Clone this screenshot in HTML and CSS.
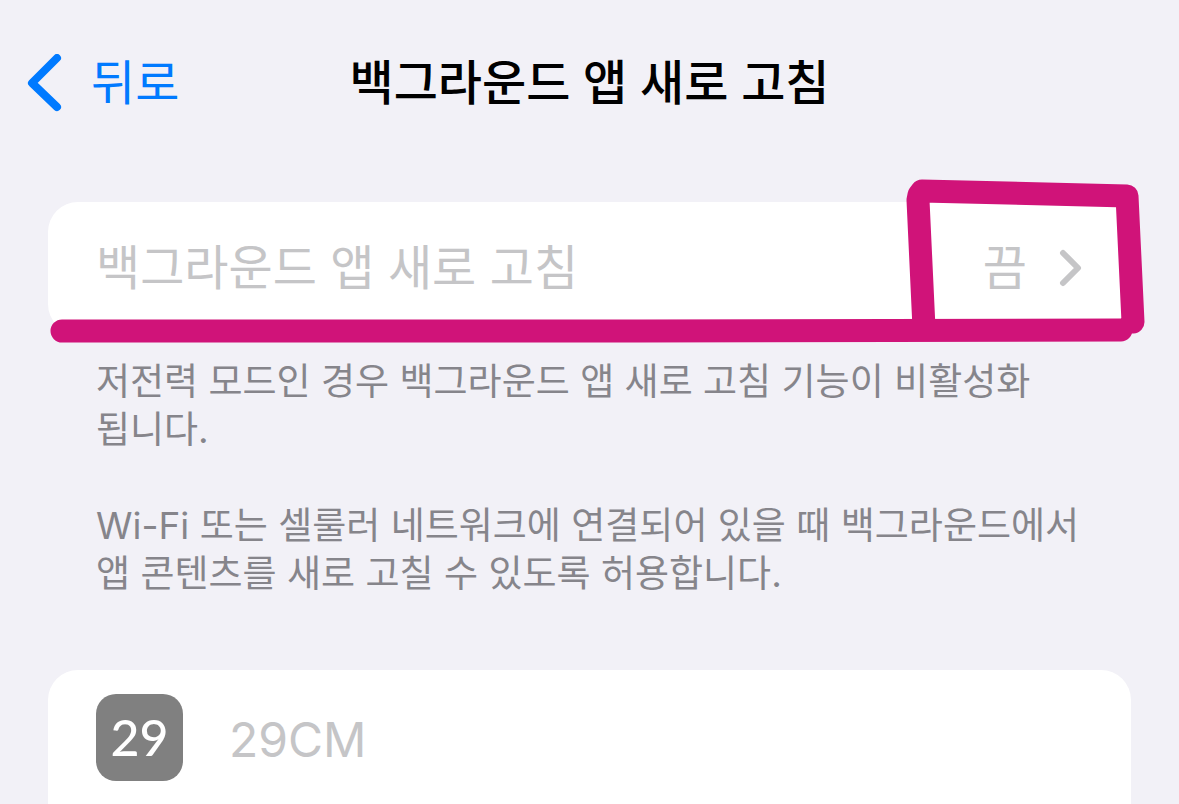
FILE: index.html
```html
<!DOCTYPE html>
<html lang="ko">
<head>
<meta charset="utf-8">
<title>백그라운드 앱 새로 고침</title>
<link rel="stylesheet" href="styles.css">
</head>
<body>
<header class="navbar">
  <a class="back" href="#">
    <svg class="back-icon" viewBox="0 0 36 58" aria-hidden="true"><path d="M30 4 5 29 30 53"/></svg>
    <span>뒤로</span>
  </a>
  <h1 class="title">백그라운드 앱 새로 고침</h1>
</header>
<main class="content">
  <section class="group">
    <button class="card setting" type="button">
      <span class="setting-name">백그라운드 앱 새로 고침</span>
      <span class="setting-value">끔</span>
      <svg class="chevron" viewBox="0 0 24 40" aria-hidden="true"><path d="M4 5 19 20 4 35"/></svg>
    </button>
    <svg class="marker" viewBox="0 0 1083 166" aria-hidden="true">
      <path d="M14 153H590L1073 152M876 150 870 22 871 17 874 13 1079 18 1085 144"/>
    </svg>
  </section>
  <div class="notes">
    <p>저전력 모드인 경우 백그라운드 앱 새로 고침 기능이 비활성화<br>됩니다.</p>
    <p>Wi-Fi 또는 셀룰러 네트워크에 연결되어 있을 때 백그라운드에서<br>앱 콘텐츠를 새로 고칠 수 있도록 허용합니다.</p>
  </div>
  <section class="card app">
    <span class="app-icon" aria-hidden="true">29</span>
    <span class="app-name">29CM</span>
  </section>
</main>
</body>
</html>
```
FILE: styles.css
```css
* { box-sizing: border-box; }
body {
  margin: 0;
  min-height: 100vh;
  background: #f2f1f7;
  font-family: Inter, "Noto Sans CJK KR", sans-serif;
  display: flex;
  flex-direction: column;
}
.navbar {
  display: grid;
  grid-template-columns: 1fr auto 1fr;
  align-items: center;
  padding: 51px 27px 47px;
}
.back {
  display: flex;
  align-items: center;
  gap: 28px;
  color: #007aff;
  font-size: 48px;
  line-height: 64px;
  text-decoration: none;
}
.back-icon { width: 36px; height: 58px; }
.back-icon path, .chevron path, .marker path {
  fill: none;
  stroke: currentColor;
  stroke-width: 8;
  stroke-linecap: round;
  stroke-linejoin: round;
}
.title { margin: 0; font-size: 48px; line-height: 64px; font-weight: 500; }
.content {
  flex: 1;
  display: flex;
  flex-direction: column;
  padding: 40px 48px 0;
}
.group { position: relative; }
.card {
  display: flex;
  align-items: center;
  width: 100%;
  border: 0;
  border-radius: 30px;
  background: #fff;
}
.setting {
  padding: 34px 48px;
  font: inherit;
  font-size: 48px;
  line-height: 64px;
  color: #c5c5c7;
  text-align: left;
}
.setting-name { flex: 1; }
.chevron { width: 24px; height: 40px; margin-left: 32px; }
.chevron path { stroke-width: 6; }
.marker {
  position: absolute;
  left: 0;
  top: -24px;
  width: 100%;
  overflow: visible;
  color: #d01379;
  pointer-events: none;
}
.marker path { stroke-width: 23; }
.notes {
  padding: 24px 48px 0;
  color: #86858b;
  font-size: 37px;
  line-height: 48px;
}
.notes p { margin: 0 0 48px; }
.app {
  flex: 1;
  align-items: flex-start;
  gap: 46px;
  margin-top: 24px;
  padding: 24px 48px 0;
  border-radius: 30px 30px 0 0;
}
.app-icon {
  width: 87px;
  height: 87px;
  border-radius: 20px;
  background: #808080;
  color: #fff;
  font-family: Lato, sans-serif;
  font-size: 50px;
  font-weight: 500;
  line-height: 87px;
  text-align: center;
}
.app-name { font-size: 48px; line-height: 92px; color: #c5c5c7; }
```
